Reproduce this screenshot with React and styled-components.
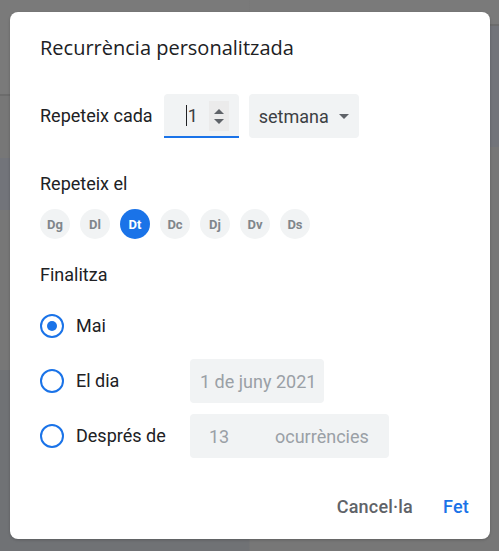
import React from "react";
import styled, { createGlobalStyle } from "styled-components";

const GlobalStyle = createGlobalStyle`
  html, body {
    margin: 0;
    padding: 0;
  }
  body {
    font-family: Roboto, "Liberation Sans", Arial, sans-serif;
  }
`;

const Backdrop = styled.div`
  width: 499px;
  height: 551px;
  box-sizing: border-box;
  padding: 12px 0 0 10px;
  background-color: #777777;
  background-image:
    linear-gradient(
      to bottom,
      #7a7a7a 0,
      #7a7a7a 94px,
      #6c6c6c 94px,
      #6c6c6c 96px,
      #777777 96px,
      #777777 158px,
      #72747a 158px,
      #72747a 210px,
      #777777 210px,
      #777777 370px,
      #707275 370px,
      #707275 100%
    ),
    linear-gradient(
      to bottom,
      #7a7a7a 0,
      #7a7a7a 24px,
      #6c6c6c 24px,
      #6c6c6c 26px,
      #72747a 26px,
      #72747a 147px,
      #777777 147px,
      #777777 100%
    );
  background-size: 50% 100%, 50% 100%;
  background-position: left top, right top;
  background-repeat: no-repeat;
  overflow: hidden;
`;

const Dialog = styled.div`
  width: 480px;
  height: 527px;
  box-sizing: border-box;
  background: #ffffff;
  border-radius: 8px;
  box-shadow: 0 1px 3px rgba(0, 0, 0, 0.2);
  padding: 24px 13px 15px 30px;
  display: flex;
  flex-direction: column;
`;

const Title = styled.h1`
  margin: 0;
  font-family: "Open Sans", Roboto, sans-serif;
  font-size: 20px;
  font-weight: 500;
  line-height: 24px;
  color: #202124;
`;

const Row = styled.div`
  display: flex;
  align-items: center;
  height: 44px;
  margin-top: ${(p) => p.top || 0}px;
`;

const Label = styled.div`
  font-size: 18px;
  line-height: 24px;
  color: #202124;
  width: ${(p) => (p.width ? `${p.width}px` : "auto")};
  flex-shrink: 0;
`;

const SectionLabel = styled(Label)`
  margin-top: ${(p) => p.top || 0}px;
`;

const NumberField = styled.div`
  margin-left: 11px;
  width: 75px;
  height: 44px;
  box-sizing: border-box;
  background: #f1f3f4;
  border-radius: 4px 4px 0 0;
  border-bottom: 2px solid #1a73e8;
  display: flex;
  align-items: center;
  padding: 0 10px 0 22px;
  justify-content: space-between;
`;

const NumberValue = styled.span`
  font-size: 18px;
  color: #3c4043;
  border-left: 1px solid #202124;
  padding-left: 1px;
  line-height: 21px;
`;

const Spinner = styled.div`
  width: 20px;
  height: 30px;
  background: #ebebeb;
  display: flex;
  flex-direction: column;
  align-items: center;
  justify-content: center;
  gap: 5px;
  margin-bottom: -2px;
`;

const Triangle = styled.span`
  width: 0;
  height: 0;
  border-left: 5px solid transparent;
  border-right: 5px solid transparent;
  ${(p) =>
    p.up
      ? "border-bottom: 5px solid #5f6368;"
      : "border-top: 5px solid #5f6368;"}
`;

const Select = styled.div`
  margin-left: 10px;
  width: 110px;
  height: 44px;
  box-sizing: border-box;
  background: #f1f3f4;
  border-radius: 4px;
  display: flex;
  align-items: center;
  justify-content: space-between;
  padding: 0 10px 0 10px;
  font-size: 18px;
  color: #3c4043;
`;

const Caret = styled.span`
  width: 0;
  height: 0;
  border-left: 5px solid transparent;
  border-right: 5px solid transparent;
  border-top: 5px solid #5f6368;
`;

const Days = styled.div`
  display: flex;
  gap: 10px;
  margin-top: 13px;
`;

const Day = styled.div`
  width: 30px;
  height: 30px;
  border-radius: 50%;
  display: flex;
  align-items: center;
  justify-content: center;
  font-size: 13px;
  font-weight: 700;
  background: ${(p) => (p.active ? "#1a73e8" : "#f1f3f4")};
  color: ${(p) => (p.active ? "#ffffff" : "#80868b")};
`;

const Options = styled.div`
  display: flex;
  flex-direction: column;
  gap: 11px;
  margin-top: 17px;
`;

const Radio = styled.span`
  width: 24px;
  height: 24px;
  box-sizing: border-box;
  border-radius: 50%;
  border: 2.5px solid #1a73e8;
  display: flex;
  align-items: center;
  justify-content: center;
  margin-right: 12px;
  flex-shrink: 0;

  &::after {
    content: "";
    width: 10px;
    height: 10px;
    border-radius: 50%;
    background: ${(p) => (p.checked ? "#1a73e8" : "transparent")};
  }
`;

const DisabledBox = styled.div`
  height: 44px;
  width: ${(p) => p.width}px;
  box-sizing: border-box;
  background: #f1f3f4;
  border-radius: 4px;
  display: flex;
  align-items: center;
  padding-left: ${(p) => p.pad}px;
  font-size: 18px;
  color: #9aa0a6;
`;

const Count = styled.span`
  width: 66px;
`;

const Footer = styled.div`
  margin-top: auto;
  display: flex;
  justify-content: flex-end;
  gap: 14px;
`;

const Button = styled.button`
  height: 36px;
  padding: 0 8px;
  border: none;
  background: transparent;
  border-radius: 4px;
  font-family: Roboto, "Liberation Sans", Arial, sans-serif;
  font-size: 18px;
  font-weight: 500;
  letter-spacing: 0.2px;
  color: ${(p) => (p.primary ? "#1a73e8" : "#5f6368")};
  cursor: pointer;
`;

const days = [
  { id: "dg", name: "Dg" },
  { id: "dl", name: "Dl" },
  { id: "dt", name: "Dt", active: true },
  { id: "dc", name: "Dc" },
  { id: "dj", name: "Dj" },
  { id: "dv", name: "Dv" },
  { id: "ds", name: "Ds" },
];

export default function App() {
  return (
    <React.Fragment>
      <GlobalStyle />
      <Backdrop>
        <Dialog>
          <Title>Recurrència personalitzada</Title>

          <Row top={34}>
            <Label>Repeteix cada</Label>
            <NumberField>
              <NumberValue>1</NumberValue>
              <Spinner>
                <Triangle up />
                <Triangle />
              </Spinner>
            </NumberField>
            <Select>
              <span>setmana</span>
              <Caret />
            </Select>
          </Row>

          <SectionLabel top={34}>Repeteix el</SectionLabel>
          <Days>
            {days.map((d) => (
              <Day key={d.id} active={d.active}>
                {d.name}
              </Day>
            ))}
          </Days>

          <SectionLabel top={24}>Finalitza</SectionLabel>
          <Options>
            <Row>
              <Radio checked />
              <Label>Mai</Label>
            </Row>
            <Row>
              <Radio />
              <Label width={114}>El dia</Label>
              <DisabledBox width={134} pad={10}>
                1 de juny 2021
              </DisabledBox>
            </Row>
            <Row>
              <Radio />
              <Label width={114}>Després de</Label>
              <DisabledBox width={199} pad={19}>
                <Count>13</Count>
                <span>ocurrències</span>
              </DisabledBox>
            </Row>
          </Options>

          <Footer>
            <Button>Cancel·la</Button>
            <Button primary>Fet</Button>
          </Footer>
        </Dialog>
      </Backdrop>
    </React.Fragment>
  );
}
